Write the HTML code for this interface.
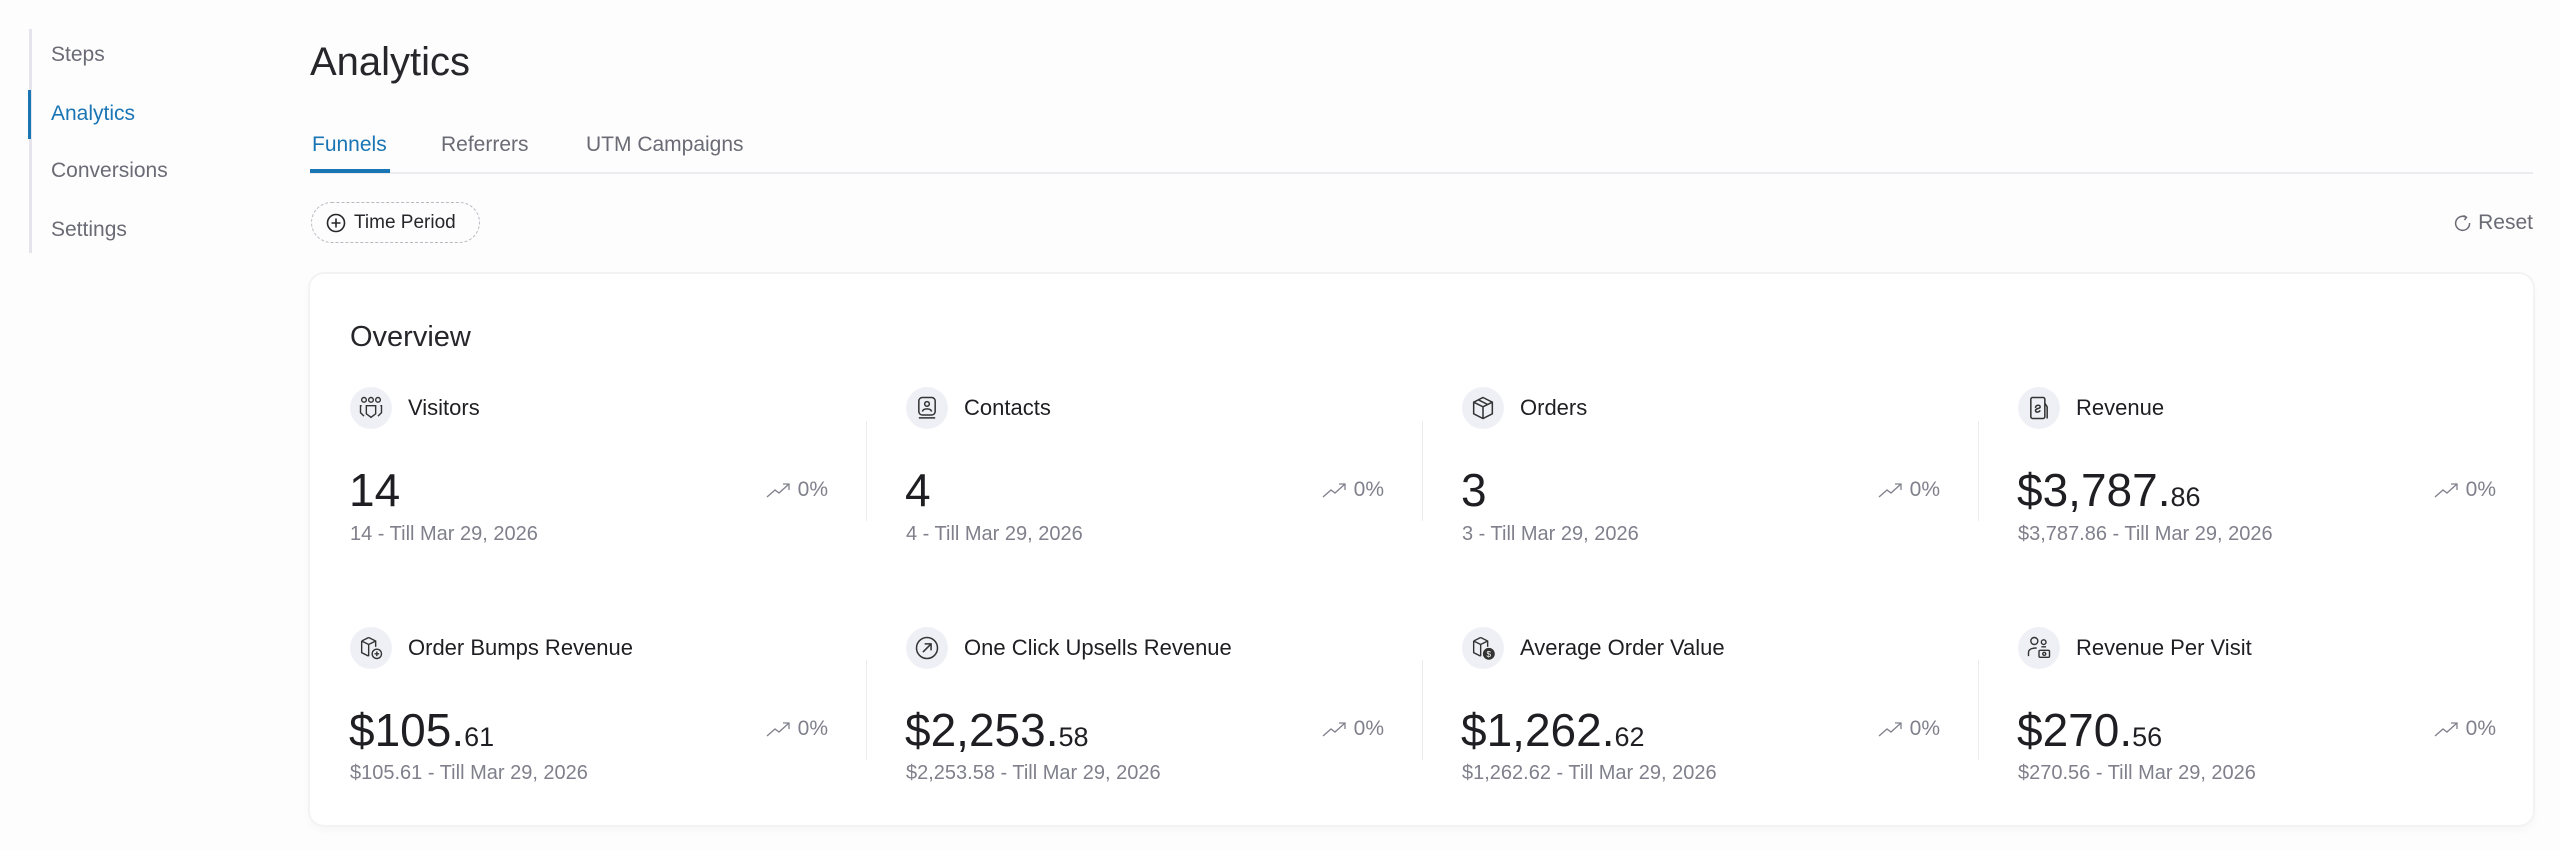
<!DOCTYPE html>
<html><head><meta charset="utf-8"><style>
*{margin:0;padding:0;box-sizing:border-box}
body{width:2560px;height:850px;background:#fdfdfd;font-family:"Liberation Sans",sans-serif;position:relative;overflow:hidden;color:#1f1f23}
.a{position:absolute;white-space:nowrap}
.side{left:29px;top:29px;width:3px;height:224px;background:#e4e4ea}
.act{left:28px;top:90px;width:3px;height:49px;background:#1a75b5}
.nav{font-size:21px;color:#6b6b76;left:51px}
.tab{font-size:21px;color:#6b6b76;top:133px}
.card{left:310px;top:274px;width:2223px;height:551px;background:#fff;border-radius:14px;box-shadow:0 0 0 2px #f3f3f5,0 4px 10px rgba(0,0,0,.04)}
.ic{width:42px;height:42px;border-radius:50%;background:#efeff6;display:flex;align-items:center;justify-content:center}
.lbl{font-size:22px;color:#1f1f23}
.num{font-size:46px;color:#1f1f23}
.num small{font-size:27px}
.sub{font-size:20px;color:#80808c}
.pct{font-size:21px;color:#80808c;width:478px;display:flex;justify-content:flex-end;align-items:center}
.pct svg{margin-right:6px}
.div{width:1px;height:100px;background:#ececf0}
</style></head><body>
<div class="a side"></div><div class="a act"></div>
<div class="a nav" style="top:43px">Steps</div>
<div class="a nav" style="top:102px;color:#1a75b5">Analytics</div>
<div class="a nav" style="top:159px">Conversions</div>
<div class="a nav" style="top:218px">Settings</div>
<div class="a" style="left:310px;top:40px;font-size:40px;color:#26262b">Analytics</div>
<div class="a tab" style="left:312px;color:#1a75b5">Funnels</div>
<div class="a tab" style="left:441px">Referrers</div>
<div class="a tab" style="left:586px">UTM Campaigns</div>
<div class="a" style="left:310px;top:172px;width:2223px;height:2px;background:#ececf0"></div>
<div class="a" style="left:310px;top:169px;width:80px;height:4px;background:#1a75b5"></div>
<div class="a" style="left:311px;top:202px;width:169px;height:41px;border:1.5px dashed #b9b9c2;border-radius:21px;display:flex;align-items:center;padding-left:14px;font-size:19px;color:#26262b">
<svg width="20" height="20" viewBox="0 0 20 20" style="margin-right:8px"><circle cx="10" cy="10" r="8.5" fill="none" stroke="#26262b" stroke-width="1.6"/><path d="M10 5.5v9M5.5 10h9" stroke="#26262b" stroke-width="1.6"/></svg>Time Period</div>
<div class="a" style="right:27px;top:211px;font-size:21px;color:#6b6b76;display:flex;align-items:center">
<svg width="18" height="18" viewBox="0 0 18 18" style="margin-right:6px"><path d="M12 3.2A7 7 0 1 0 15.6 9" fill="none" stroke="#6b6b76" stroke-width="1.5"/><path d="M9.5 1.5l3 1.8-2 2.8" fill="none" stroke="#6b6b76" stroke-width="1.5"/></svg>Reset</div>
<div class="a card"></div>
<div class="a" style="left:350px;top:321px;font-size:29px;color:#26262b">Overview</div>

<div class="a div" style="left:866px;top:421px"></div>
<div class="a div" style="left:1422px;top:421px"></div>
<div class="a div" style="left:1978px;top:421px"></div>
<div class="a div" style="left:866px;top:660px"></div>
<div class="a div" style="left:1422px;top:660px"></div>
<div class="a div" style="left:1978px;top:660px"></div>

<!-- row 1 -->
<div class="a" style="left:350px;top:387px;display:flex;align-items:center"><div class="ic"><svg width="28" height="28" viewBox="0 0 24 24" fill="none" stroke="#333" stroke-width="1.2"><circle cx="6" cy="5" r="2"/><circle cx="12" cy="5" r="2"/><circle cx="18" cy="5" r="2"/><path d="M4 10h-1v6l3 3M20 10h1v6l-3 3M8 10h8v7l-4 3-4-3z"/></svg></div><span class="lbl" style="margin-left:16px">Visitors</span></div>
<div class="a num" style="left:349px;top:463px">14</div>
<div class="a pct" style="left:350px;top:478px"><svg width="26" height="18" viewBox="0 0 26 18" fill="none" stroke="#80808c" stroke-width="1.3"><path d="M1 16l8-7 4 3 10-9M17 3h6v6"/></svg>0%</div>
<div class="a sub" style="left:350px;top:523px">14 - Till Mar 29, 2026</div>

<div class="a" style="left:906px;top:387px;display:flex;align-items:center"><div class="ic"><svg width="28" height="28" viewBox="0 0 24 24" fill="none" stroke="#333" stroke-width="1.3"><rect x="5" y="3" width="14" height="15" rx="3"/><circle cx="12" cy="8.5" r="2"/><path d="M8 15c1-3 7-3 8 0M5 20.5h14"/></svg></div><span class="lbl" style="margin-left:16px">Contacts</span></div>
<div class="a num" style="left:905px;top:463px">4</div>
<div class="a pct" style="left:906px;top:478px"><svg width="26" height="18" viewBox="0 0 26 18" fill="none" stroke="#80808c" stroke-width="1.3"><path d="M1 16l8-7 4 3 10-9M17 3h6v6"/></svg>0%</div>
<div class="a sub" style="left:906px;top:523px">4 - Till Mar 29, 2026</div>

<div class="a" style="left:1462px;top:387px;display:flex;align-items:center"><div class="ic"><svg width="28" height="28" viewBox="0 0 24 24" fill="none" stroke="#333" stroke-width="1.3"><path d="M12 3l8 4v10l-8 4-8-4V7zM4 7l8 4 8-4M12 11v10M8 5l8 4"/></svg></div><span class="lbl" style="margin-left:16px">Orders</span></div>
<div class="a num" style="left:1461px;top:463px">3</div>
<div class="a pct" style="left:1462px;top:478px"><svg width="26" height="18" viewBox="0 0 26 18" fill="none" stroke="#80808c" stroke-width="1.3"><path d="M1 16l8-7 4 3 10-9M17 3h6v6"/></svg>0%</div>
<div class="a sub" style="left:1462px;top:523px">3 - Till Mar 29, 2026</div>

<div class="a" style="left:2018px;top:387px;display:flex;align-items:center"><div class="ic"><svg width="28" height="28" viewBox="0 0 24 24" fill="none" stroke="#333" stroke-width="1.3"><rect x="5" y="3" width="12" height="18" rx="1.5"/><path d="M9 12c0-3 4-3 4-1s-4 1-4 3 3 2 4 0M17 8l2 3v10"/></svg></div><span class="lbl" style="margin-left:16px">Revenue</span></div>
<div class="a num" style="left:2017px;top:463px">$3,787.<small>86</small></div>
<div class="a pct" style="left:2018px;top:478px"><svg width="26" height="18" viewBox="0 0 26 18" fill="none" stroke="#80808c" stroke-width="1.3"><path d="M1 16l8-7 4 3 10-9M17 3h6v6"/></svg>0%</div>
<div class="a sub" style="left:2018px;top:523px">$3,787.86 - Till Mar 29, 2026</div>

<!-- row 2 -->
<div class="a" style="left:350px;top:627px;display:flex;align-items:center"><div class="ic"><svg width="28" height="28" viewBox="0 0 24 24" fill="none" stroke="#333" stroke-width="1.2"><path d="M10 3l6 3v5M4 6l6-3M4 6v10l6 3M4 6l6 3 6-3M10 9v10"/><circle cx="17" cy="17" r="4"/><path d="M17 15v4M15 17h4"/></svg></div><span class="lbl" style="margin-left:16px">Order Bumps Revenue</span></div>
<div class="a num" style="left:349px;top:703px">$105.<small>61</small></div>
<div class="a pct" style="left:350px;top:717px"><svg width="26" height="18" viewBox="0 0 26 18" fill="none" stroke="#80808c" stroke-width="1.3"><path d="M1 16l8-7 4 3 10-9M17 3h6v6"/></svg>0%</div>
<div class="a sub" style="left:350px;top:762px">$105.61 - Till Mar 29, 2026</div>

<div class="a" style="left:906px;top:627px;display:flex;align-items:center"><div class="ic"><svg width="28" height="28" viewBox="0 0 24 24" fill="none" stroke="#333" stroke-width="1.3"><circle cx="12" cy="12" r="9"/><path d="M8.5 15.5l7-7M10 8.5h5.5V14"/></svg></div><span class="lbl" style="margin-left:16px">One Click Upsells Revenue</span></div>
<div class="a num" style="left:905px;top:703px">$2,253.<small>58</small></div>
<div class="a pct" style="left:906px;top:717px"><svg width="26" height="18" viewBox="0 0 26 18" fill="none" stroke="#80808c" stroke-width="1.3"><path d="M1 16l8-7 4 3 10-9M17 3h6v6"/></svg>0%</div>
<div class="a sub" style="left:906px;top:762px">$2,253.58 - Till Mar 29, 2026</div>

<div class="a" style="left:1462px;top:627px;display:flex;align-items:center"><div class="ic"><svg width="28" height="28" viewBox="0 0 24 24" fill="none" stroke="#333" stroke-width="1.2"><path d="M10 3l6 3v5M4 6l6-3M4 6v10l6 3M4 6l6 3 6-3M10 9v10"/><circle cx="17" cy="17" r="4.5" fill="#333"/><text x="17" y="19.5" font-size="7" fill="#fff" stroke="none" text-anchor="middle" font-family="Liberation Sans">$</text></svg></div><span class="lbl" style="margin-left:16px">Average Order Value</span></div>
<div class="a num" style="left:1461px;top:703px">$1,262.<small>62</small></div>
<div class="a pct" style="left:1462px;top:717px"><svg width="26" height="18" viewBox="0 0 26 18" fill="none" stroke="#80808c" stroke-width="1.3"><path d="M1 16l8-7 4 3 10-9M17 3h6v6"/></svg>0%</div>
<div class="a sub" style="left:1462px;top:762px">$1,262.62 - Till Mar 29, 2026</div>

<div class="a" style="left:2018px;top:627px;display:flex;align-items:center"><div class="ic"><svg width="28" height="28" viewBox="0 0 24 24" fill="none" stroke="#333" stroke-width="1.2"><circle cx="8" cy="6" r="3"/><circle cx="16" cy="7" r="2"/><path d="M3 19v-3c0-3 3-4 7-4M14 11h4"/><rect x="12" y="14" width="9" height="6" rx="1"/><circle cx="16.5" cy="17" r="1.3"/></svg></div><span class="lbl" style="margin-left:16px">Revenue Per Visit</span></div>
<div class="a num" style="left:2017px;top:703px">$270.<small>56</small></div>
<div class="a pct" style="left:2018px;top:717px"><svg width="26" height="18" viewBox="0 0 26 18" fill="none" stroke="#80808c" stroke-width="1.3"><path d="M1 16l8-7 4 3 10-9M17 3h6v6"/></svg>0%</div>
<div class="a sub" style="left:2018px;top:762px">$270.56 - Till Mar 29, 2026</div>
</body></html>
